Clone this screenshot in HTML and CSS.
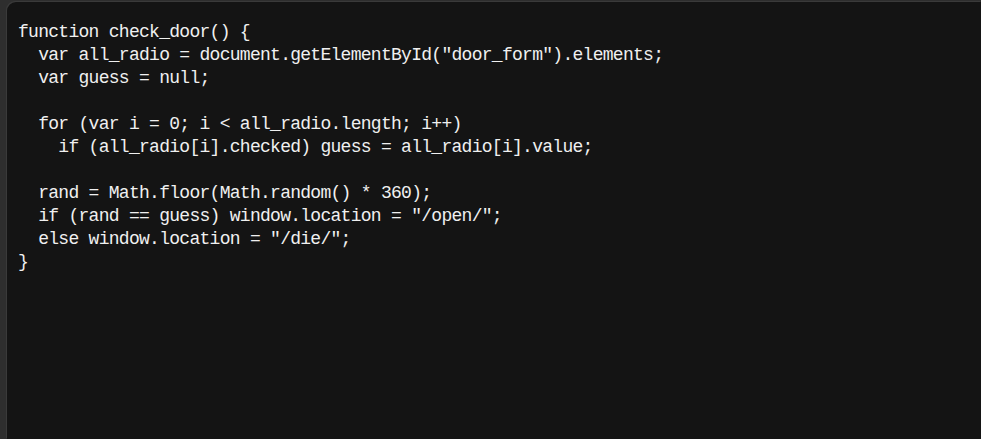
FILE: index.html
```html
<!DOCTYPE html>
<html>
<head>
<meta charset="utf-8">
<link rel="stylesheet" href="styles.css">
</head>
<body>
<div class="frame">
<pre class="code">function check_door() {
  var all_radio = document.getElementById("door_form").elements;
  var guess = null;

  for (var i = 0; i &lt; all_radio.length; i++)
    if (all_radio[i].checked) guess = all_radio[i].value;

  rand = Math.floor(Math.random() * 360);
  if (rand == guess) window.location = "/open/";
  else window.location = "/die/";
}</pre>
</div>
</body>
</html>
```
FILE: styles.css
```css
html, body {
  margin: 0;
  padding: 0;
  height: 100%;
  background: #2e2e2e;
}
body {
  display: flex;
  flex-direction: column;
  padding: 2px 0 0 7px;
  box-sizing: border-box;
}
.frame {
  flex: 1;
  background: #141414;
  border-top-left-radius: 9px;
  box-shadow: -1px -1px 0 #3a3a3a;
  padding: 19px 0 0 11px;
}
.code {
  margin: 0;
  font-family: "Liberation Mono", monospace;
  font-size: 18px;
  letter-spacing: -0.72px;
  line-height: 23px;
  color: #f0f0f0;
  white-space: pre;
}
```
